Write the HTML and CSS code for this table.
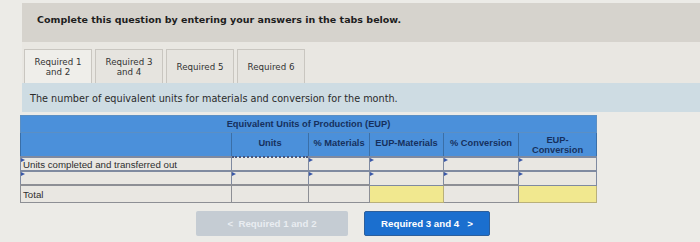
FILE: index.html
```html
<!DOCTYPE html>
<html lang="en">
<head>
<meta charset="utf-8">
<title>Equivalent units</title>
<link rel="stylesheet" href="styles.css">
</head>
<body>
<div class="page">
  <div class="header">Complete this question by entering your answers in the tabs below.</div>
  <div class="tabs">
    <div class="tab active">Required 1<br>and 2</div>
    <div class="tab">Required 3<br>and 4</div>
    <div class="tab">Required 5</div>
    <div class="tab">Required 6</div>
  </div>
  <div class="panel">The number of equivalent units for materials and conversion for the month.</div>
  <table class="eup">
    <colgroup>
      <col class="c-label"><col class="c-units"><col class="c-pm"><col class="c-em"><col class="c-pc"><col class="c-ec">
    </colgroup>
    <tr class="h1"><th colspan="6">Equivalent Units of Production (EUP)</th></tr>
    <tr class="h2">
      <th></th><th class="up">Units</th><th class="up">% Materials</th><th class="up">EUP-Materials</th><th class="up">% Conversion</th><th>EUP-<br>Conversion</th>
    </tr>
    <tr class="row">
      <td class="lbl mark">Units completed and transferred out</td>
      <td class="inp dotted"></td><td class="inp mark"></td><td class="inp mark"></td><td class="inp mark"></td><td class="inp mark"></td>
    </tr>
    <tr class="row">
      <td class="lbl mark"></td>
      <td class="inp mark"></td><td class="inp mark"></td><td class="inp mark"></td><td class="inp mark"></td><td class="inp mark"></td>
    </tr>
    <tr class="row total">
      <td class="lbl">Total</td>
      <td class="inp"></td><td class="plain"></td><td class="yellow"></td><td class="plain"></td><td class="yellow"></td>
    </tr>
  </table>
  <div class="nav">
    <button class="btn prev">&lt;&nbsp;&nbsp;Required 1 and 2</button>
    <button class="btn next">Required 3 and 4&nbsp;&nbsp;&nbsp;&gt;</button>
  </div>
</div>
</body>
</html>
```
FILE: styles.css
```css
html, body {
  margin: 0;
  padding: 0;
  background: #ecebe7;
}

.page {
  width: 700px;
  height: 242px;
  padding: 3px 0 0 22px;
  box-sizing: border-box;
  font-family: "DejaVu Sans", Verdana, sans-serif;
  color: #2a2a2a;
}

.header {
  height: 39px;
  background: #d6d3cd;
  font-weight: bold;
  font-size: 9.5px;
  line-height: 33px;
  padding-left: 15px;
  color: #1e1e1e;
}

.tabs {
  display: flex;
  gap: 3px;
  padding: 7px 0 0 2px;
  height: 34px;
  background: #e9e7e2;
}

.tab {
  width: 66px;
  border: 1px solid #c9c6c0;
  border-bottom: none;
  background: #e6e4df;
  font-size: 8.7px;
  line-height: 10px;
  color: #333;
  display: flex;
  align-items: center;
  justify-content: center;
  text-align: center;
}

.tab.active {
  background: #efeeea;
}

.panel {
  height: 29px;
  background: #cedce3;
  font-size: 9.7px;
  line-height: 31px;
  padding-left: 8px;
  color: #2b2b2b;
}

.eup {
  margin: 3px 0 0 -2px;
  border-collapse: collapse;
  table-layout: fixed;
  width: 576px;
  font-family: "Liberation Sans", Arial, sans-serif;
}

.c-label { width: 211px; }
.c-units { width: 77px; }
.c-pm { width: 61px; }
.c-em { width: 74px; }
.c-pc { width: 75px; }
.c-ec { width: 78px; }

.eup th {
  background: #4b90da;
  color: #16305e;
  font-size: 9.3px;
  font-weight: bold;
  padding: 0;
  line-height: 10px;
}

.h1 th {
  height: 16px;
  border: 1px solid #5b8fc4;
}

.h2 th {
  height: 23px;
  border: 1px solid #3a6fa8;
  border-top-color: #5f95cc;
}

.h2 th.up {
  height: 20px;
  padding-bottom: 3px;
}

.row td {
  background: #e9e7e2;
  border: 1px solid #7f8aa0;
  border-width: 2px 1px 1px 1px;
  padding: 0;
  position: relative;
  font-size: 9.7px;
  line-height: 11px;
  color: #2e2e2e;
}

.row:first-of-type td { border-top-width: 1px; }

.row td { height: 12px; }
.row.total td { height: 16px; border-color: #8d8f95; }

.lbl {
  padding-left: 2px !important;
  text-align: left;
}

.dotted {
  border: 1px dotted #4a5578 !important;
  border-top: 2px dotted #4a5578 !important;
}

.row td.plain {
  background: #e9e7e2;
}

.row td.yellow {
  background: #f1e88f;
  border: 1px solid #b9b07a;
}

/* small blue tick that marks an editable cell */
.mark::before {
  content: "";
  position: absolute;
  left: 0;
  top: 0;
  border-left: 4px solid #3a58a8;
  border-top: 2.5px solid transparent;
  border-bottom: 2.5px solid transparent;
}

.nav {
  display: flex;
  gap: 16px;
  margin: 8px 0 0 174px;
}

.btn {
  border: none;
  border-radius: 2px;
  font-family: "Liberation Sans", Arial, sans-serif;
  font-weight: bold;
  font-size: 9.7px;
  height: 25px;
  padding: 0;
  cursor: pointer;
}

.btn.prev {
  width: 152px;
  background: #c5ccd3;
  color: #e9edf1;
}

.btn.next {
  width: 126px;
  background: #1b6fcf;
  color: #ffffff;
  border: 1px solid #2c5f9c;
}
```
